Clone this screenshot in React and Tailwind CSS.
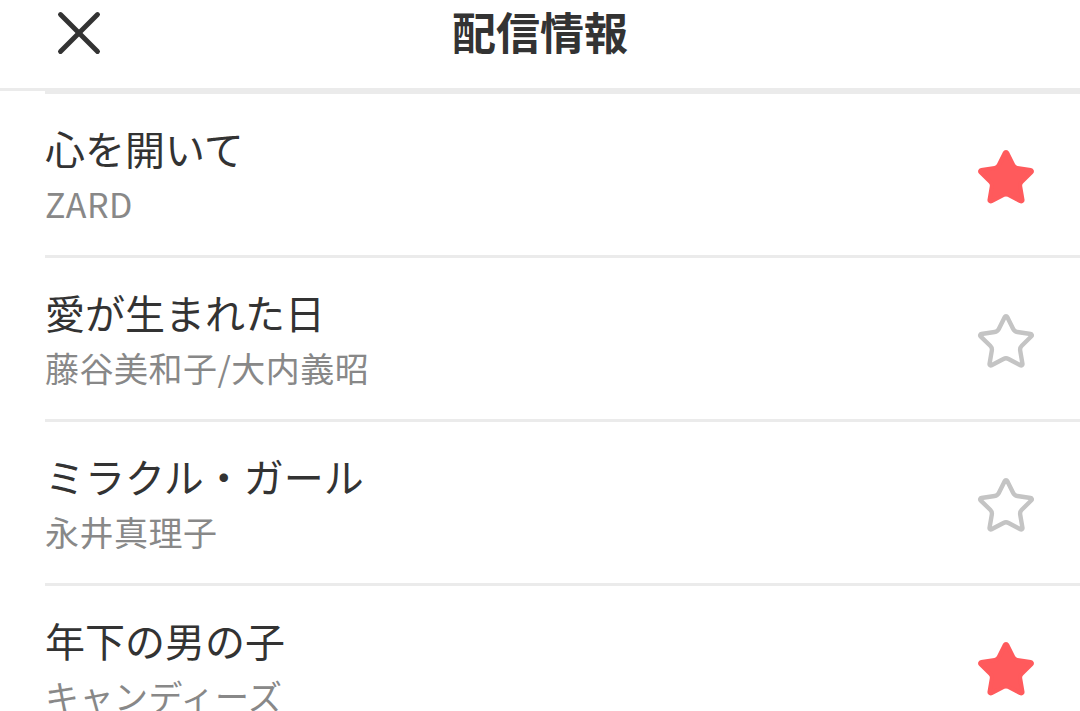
import { X, Star } from 'lucide-react';

const songs = [
    { title: '心を開いて', artist: 'ZARD', fav: true },
    { title: '愛が生まれた日', artist: '藤谷美和子/大内義昭', fav: false },
    { title: 'ミラクル・ガール', artist: '永井真理子', fav: false },
    { title: '年下の男の子', artist: 'キャンディーズ', fav: true },
];

const font = { fontFamily: '"Noto Sans CJK JP", "Noto Sans", sans-serif' };

const App = () => {
    return (
        <div className="w-[1080px] h-[711px] overflow-hidden bg-white" style={font}>
            {/* En-tête */}
            <header className="relative h-[91px] flex items-start justify-center pt-[9px] border-b-[3px] border-[#ebebeb]">
                <button className="absolute left-[42px] top-[-4px] w-[74px] h-[74px] flex items-center justify-center text-[#333]">
                    <X className="w-[74px] h-[74px]" strokeWidth={1.6} />
                </button>
                <h1 className="text-[44px] font-bold text-[#333] leading-[44px]">配信情報</h1>
            </header>

            {/* Liste */}
            <ul className="pl-[45px]">
                {songs.map((song, index) => (
                    <li
                        key={index}
                        className="flex items-start border-t-[3px] border-[#ebebeb] pr-[43px] h-[164px]"
                    >
                        <div className="flex-1 pt-[27px]">
                            <p className="text-[40px] leading-[54px] text-[#333]">{song.title}</p>
                            <p className="text-[34px] leading-[43px] tracking-[0.5px] text-[#888] mt-[7px]">{song.artist}</p>
                        </div>
                        <div className="mt-[53px]">
                            {song.fav ? (
                                <Star className="w-[62px] h-[62px]" fill="#ff5a5c" stroke="#ff5a5c" strokeWidth={1.6} />
                            ) : (
                                <Star className="w-[62px] h-[62px]" stroke="#c4c4c4" strokeWidth={1.7} />
                            )}
                        </div>
                    </li>
                ))}
            </ul>
        </div>
    );
};

export default App;
